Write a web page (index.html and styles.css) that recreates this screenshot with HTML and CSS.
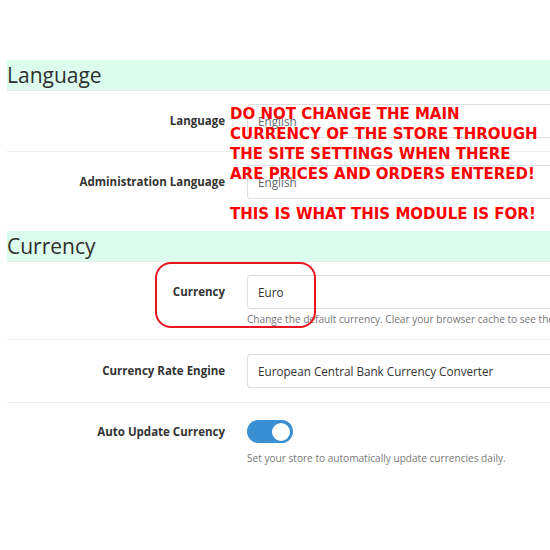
FILE: index.html
```html
<!DOCTYPE html>
<html>
<head>
<meta charset="utf-8">
<link rel="stylesheet" href="styles.css">
</head>
<body>
<div class="page">
  <h2 class="section-head">Language</h2>
  <div class="row">
    <div class="label">Language</div>
    <div class="field"><div class="input muted">English</div></div>
  </div>
  <div class="row last">
    <div class="label">Administration Language</div>
    <div class="field"><div class="input muted">English</div></div>
  </div>

  <h2 class="section-head">Currency</h2>
  <div class="row">
    <div class="label">Currency</div>
    <div class="field">
      <div class="input">Euro</div>
      <div class="help">Change the default currency. Clear your browser cache to see the change and reset your existing cookie.</div>
    </div>
  </div>
  <div class="row wide">
    <div class="label">Currency Rate Engine</div>
    <div class="field"><div class="input">European Central Bank Currency Converter</div></div>
  </div>
  <div class="row noborder">
    <div class="label toggle-label">Auto Update Currency</div>
    <div class="field">
      <div class="toggle"><span class="knob"></span></div>
      <div class="help">Set your store to automatically update currencies daily.</div>
    </div>
  </div>

  <div class="highlight"></div>
  <div class="warning">
    <p>DO NOT CHANGE THE MAIN<br>CURRENCY OF THE STORE THROUGH<br>THE SITE SETTINGS WHEN THERE<br>ARE PRICES AND ORDERS ENTERED!</p>
    <p>THIS IS WHAT THIS MODULE IS FOR!</p>
  </div>
</div>
</body>
</html>
```
FILE: styles.css
```css
html, body {
  margin: 0;
  padding: 0;
  overflow: hidden;
  background: #fff;
}
body {
  font-family: "Open Sans", "Noto Sans", sans-serif;
  color: #333;
}
.page {
  position: relative;
  width: 543px;
  padding: 60px 0 0 7px;
  overflow: hidden;
}
.section-head {
  margin: 0;
  height: 30px;
  line-height: 30px;
  font-size: 21px;
  font-weight: 400;
  color: #2f2f2f;
  background: #dcfcee;
  border-bottom: 1px solid #e4ece8;
}
.row {
  display: grid;
  grid-template-columns: 240px 1fr;
  align-items: start;
  padding: 13px 0 13px;
  border-bottom: 1px solid #ececec;
}
.row.last {
  border-bottom: none;
  padding-bottom: 32px;
}
.row.wide {
  padding: 14px 0 14px;
}
.row.noborder {
  border-bottom: none;
  padding-top: 17px;
}
.field {
  min-width: 0;
}
.label {
  text-align: right;
  padding-right: 22px;
  font-size: 11.5px;
  font-weight: 700;
  color: #333;
  line-height: 34px;
}
.toggle-label {
  line-height: 24px;
}
.input {
  width: 400px;
  height: 32px;
  line-height: 32px;
  border: 1px solid #dedede;
  border-right: none;
  border-radius: 4px 0 0 4px;
  padding-left: 10px;
  font-size: 11.7px;
  color: #333;
}
.input.muted {
  color: #666;
}
.help {
  margin-top: 3px;
  font-size: 10.1px;
  color: #777;
  white-space: nowrap;
  overflow: hidden;
  line-height: 14px;
}
.toggle {
  width: 46px;
  height: 23px;
  border-radius: 12px;
  background: #3a8fd2;
  position: relative;
  margin-bottom: 8px;
}
.knob {
  position: absolute;
  right: 3px;
  top: 2.5px;
  width: 18px;
  height: 18px;
  border-radius: 50%;
  background: #fff;
}
.highlight {
  position: absolute;
  left: 155px;
  top: 262px;
  width: 157px;
  height: 62px;
  border: 2px solid #e8141e;
  border-radius: 16px;
}
.warning {
  position: absolute;
  left: 230px;
  top: 104px;
  font-family: "DejaVu Sans", Verdana, sans-serif;
  font-weight: 700;
  font-size: 15px;
  line-height: 20px;
  color: #ff0000;
}
.warning p {
  margin: 0 0 20px 0;
}
```
